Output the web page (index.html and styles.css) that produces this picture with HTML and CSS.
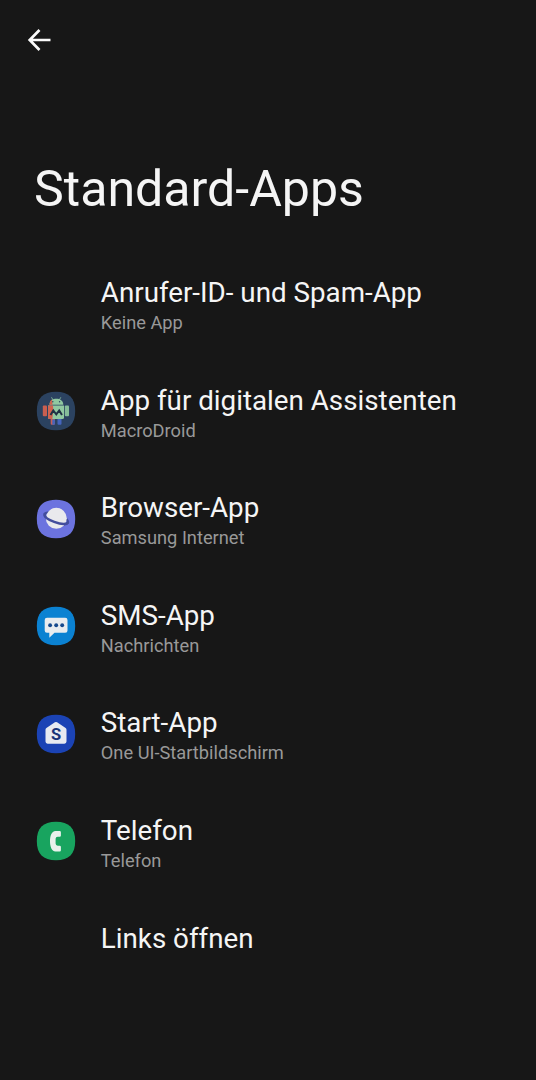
FILE: index.html
```html
<!DOCTYPE html>
<html lang="de">
<head>
<meta charset="utf-8">
<title>Standard-Apps</title>
<link rel="stylesheet" href="styles.css">
</head>
<body>
<svg class="defs" width="0" height="0"><defs><path id="tile" d="M26 6.800C39 6.800 45.200 13 45.200 26S39 45.200 26 45.200 6.800 39 6.800 26 13 6.800 26 6.800Z"/></defs></svg>
<header class="topbar">
<svg class="back" viewBox="0 0 24 24"><path d="M23.500 12H3M12.500 2L2.700 12l9.800 10" fill="none" stroke="#fafafa" stroke-width="2.700"/></svg>
</header>
<h1 class="title">Standard-Apps</h1>
<main class="list">
<section class="row"><span class="icon"></span><div class="text"><h2>Anrufer-ID- und Spam-App</h2><p>Keine App</p></div></section>
<section class="row">
<svg class="icon" viewBox="6 6 40 40">
<use href="#tile" fill="#2b4260"/>
<path d="M21.500 12.300l1.700 3M30.800 12.300l-1.700 3" stroke="#91c9a1" stroke-width=".8"/>
<path d="M19.500 19.700C19.500 11.800 33.300 11.800 33.300 19.700Z" fill="#91c9a1"/>
<path d="M19.500 19.700c.1-2.600 1-4.200 2.500-5.200l.5 5.200Z" fill="#d06350"/>
<circle cx="22.800" cy="16.800" r=".7" fill="#2b4260"/><circle cx="29.600" cy="16.800" r=".7" fill="#2b4260"/>
<rect x="12.800" y="20.500" width="4.200" height="10.800" rx="1" fill="#c95f50"/>
<rect x="34.800" y="20.500" width="4.200" height="10.800" rx="1" fill="#86bd9a"/>
<path d="M20.700 33h4.200v5.700q0 1-1 1h-2.200q-1 0-1-1Z" fill="#c76057"/>
<path d="M22.300 34.500h2.600v4.200q0 1-1 1h-1.600ZM27.500 33h4v5.700q0 1-1 1h-2q-1 0-1-1Z" fill="#4565bd"/>
<path d="M18 20.600h16v12q0 1.500-1.500 1.500h-13q-1.500 0-1.500-1.500Z" fill="#91c9a1"/>
<path d="M18 20.600h5l.3 6-1 7.500h-2.800q-1.500 0-1.500-1.500Z" fill="#d06350"/>
<path d="M20.500 30l2.800-4.500 3 3.800 2.900-3.800 2.800 4.500" fill="none" stroke="#203044" stroke-width="2"/>
</svg>
<div class="text"><h2>App für digitalen Assistenten</h2><p>MacroDroid</p></div></section>
<section class="row">
<svg class="icon" viewBox="6 6 40 40">
<use href="#tile" fill="#6c73df"/>
<ellipse cx="26.300" cy="25.500" rx="12.400" ry="4.600" transform="rotate(20 26.300 25.500)" fill="none" stroke="#434d9d" stroke-width="2.200"/>
<circle cx="26.300" cy="25.300" r="10.500" fill="#e9e9ed"/>
<path d="M14.600 21C13.600 26.500 33.500 33.700 37.900 29.700" fill="none" stroke="#434d9d" stroke-width="2.500" stroke-linecap="round"/>
</svg>
<div class="text"><h2>Browser-App</h2><p>Samsung Internet</p></div></section>
<section class="row">
<svg class="icon" viewBox="6 6 40 40">
<use href="#tile" fill="#0b82d2"/>
<path d="M17 17.700h18.200q2.300 0 2.300 2.300v10.500q0 2.300-2.300 2.300H24.500L19.300 37.700v-4.900H17q-2.300 0-2.300-2.300V20q0-2.300 2.300-2.300Z" fill="#e9ecef"/>
<g fill="#174a8d"><circle cx="20.100" cy="25.300" r="1.950"/><circle cx="26.200" cy="25.300" r="1.950"/><circle cx="32.200" cy="25.300" r="1.950"/></g>
</svg>
<div class="text"><h2>SMS-App</h2><p>Nachrichten</p></div></section>
<section class="row">
<svg class="icon" viewBox="6 6 40 40">
<use href="#tile" fill="#1b43b5"/>
<path d="M24.900 14.300q1.100-.8 2.200 0l8.500 5.700q.9.600.9 1.700v11.900q0 2.100-2.100 2.100H17.600q-2.100 0-2.100-2.100V21.700q0-1.100.9-1.700Z" fill="#e7eaf1"/>
<text class="letter" x="26" y="32.300" text-anchor="middle">S</text>
</svg>
<div class="text"><h2>Start-App</h2><p>One UI-Startbildschirm</p></div></section>
<section class="row">
<svg class="icon" viewBox="6 6 40 40">
<use href="#tile" fill="#18a45f"/>
<path d="M25.500 16h4.200q1.200 0 1.200 1.200v3.300q0 1.200-1.200 1.200h-2q-2.100 0-2.100 2.100v4.800q0 2.100 2.100 2.100h2q1.200 0 1.200 1.200v3.300q0 1.200-1.200 1.200h-4.200C21.500 36.400 20 31 20 26.200S21.500 16 25.500 16Z" fill="#e8f1ec"/>
</svg>
<div class="text"><h2>Telefon</h2><p>Telefon</p></div></section>
<section class="row"><span class="icon"></span><div class="text"><h2>Links öffnen</h2></div></section>
</main>
</body>
</html>
```
FILE: styles.css
```css
* { box-sizing: border-box; margin: 0; }
body { background: #171717; color: #f5f5f5; font-family: Roboto, sans-serif; }
.defs { display: none; }
.topbar { height: 80px; padding: 28px 0 0 27px; }
.back { display: block; width: 24px; height: 24px; }
.title { padding: 76.5px 0 0 34px; height: 191px; font-size: 50.1px; line-height: 64px; font-weight: 400; }
.row { display: flex; gap: 24.8px; height: 107.6px; padding-left: 36px; }
.icon { flex: none; width: 40px; height: 40px; margin-top: 12.4px; }
.letter { font: 700 16.5px Roboto, sans-serif; fill: #193478; }
h2 { font-size: 27.75px; line-height: 36px; font-weight: 400; padding-top: 4px; }
p { font-size: 18.25px; line-height: 24.5px; color: #999; }
```
